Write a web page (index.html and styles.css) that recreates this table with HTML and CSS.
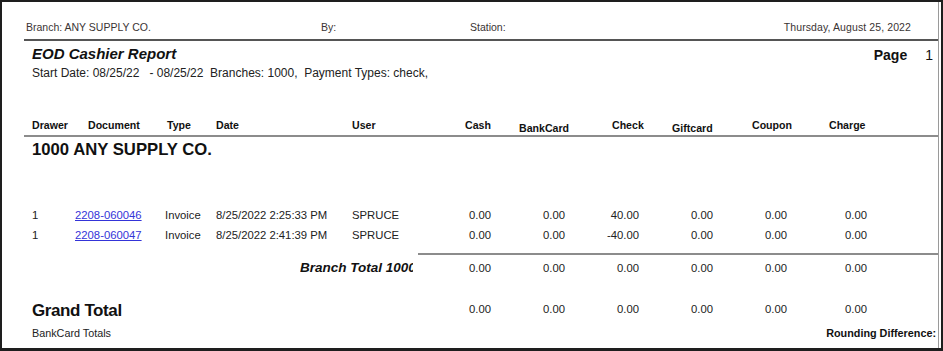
FILE: index.html
```html
<!DOCTYPE html>
<html>
<head>
<meta charset="utf-8">
<title>EOD Cashier Report</title>
<link rel="stylesheet" href="styles.css">
</head>
<body>
<div class="frame">
  <div class="sheet">
    <div class="pagehead">
      <span>Branch: ANY SUPPLY CO.</span>
      <span>By:</span>
      <span>Station:</span>
      <span class="date">Thursday, August 25, 2022</span>
    </div>
    <div class="rule-dark"></div>
    <div class="titlebar">
      <div class="titles">
        <div class="title">EOD Cashier Report</div>
        <div class="subtitle">Start Date: 08/25/22&nbsp;&nbsp; - 08/25/22&nbsp; Branches: 1000,&nbsp; Payment Types: check,</div>
      </div>
      <div class="pageno"><span class="pagelabel">Page</span><span>1</span></div>
    </div>
    <div class="colhead">
      <span>Drawer</span>
      <span>Document</span>
      <span>Type</span>
      <span>Date</span>
      <span>User</span>
      <span>Cash</span>
      <span class="low">BankCard</span>
      <span>Check</span>
      <span class="low">Giftcard</span>
      <span>Coupon</span>
      <span>Charge</span>
    </div>
    <div class="rule-gray"></div>
    <div class="branch">1000 ANY SUPPLY CO.</div>
    <div class="rows">
      <div class="row">
        <span>1</span>
        <a class="doc" href="#">2208-060046</a>
        <span>Invoice</span>
        <span>8/25/2022 2:25:33 PM</span>
        <span>SPRUCE</span>
        <span class="num">0.00</span>
        <span class="num">0.00</span>
        <span class="num">40.00</span>
        <span class="num">0.00</span>
        <span class="num">0.00</span>
        <span class="num">0.00</span>
      </div>
      <div class="row">
        <span>1</span>
        <a class="doc" href="#">2208-060047</a>
        <span>Invoice</span>
        <span>8/25/2022 2:41:39 PM</span>
        <span>SPRUCE</span>
        <span class="num">0.00</span>
        <span class="num">0.00</span>
        <span class="num">-40.00</span>
        <span class="num">0.00</span>
        <span class="num">0.00</span>
        <span class="num">0.00</span>
      </div>
    </div>
    <div class="rule-sub"></div>
    <div class="row total">
      <span class="branch-total">Branch Total 1000</span>
      <span class="num">0.00</span>
      <span class="num">0.00</span>
      <span class="num">0.00</span>
      <span class="num">0.00</span>
      <span class="num">0.00</span>
      <span class="num">0.00</span>
    </div>
    <div class="row grand">
      <span class="grand-label">Grand Total</span>
      <span class="num">0.00</span>
      <span class="num">0.00</span>
      <span class="num">0.00</span>
      <span class="num">0.00</span>
      <span class="num">0.00</span>
      <span class="num">0.00</span>
    </div>
    <div class="footer">
      <span>BankCard Totals</span>
      <span class="rounding">Rounding Difference:</span>
    </div>
  </div>
</div>
</body>
</html>
```
FILE: styles.css
```css
* { box-sizing: border-box; }
html, body { margin: 0; padding: 0; background: #fff; }
body {
  font-family: "Liberation Sans", Arial, sans-serif;
  color: #1c1c1c;
}
.frame {
  width: 943px;
  height: 351px;
  border: 2px solid #1e1e1e;
  border-bottom-width: 3px;
  padding-right: 2px;
  overflow: hidden;
}
.sheet {
  width: 937px;
  height: 100%;
  border-right: 1px solid #9a9a9a;
  padding-left: 22px;
  overflow: hidden;
}
.pagehead {
  height: 37px;
  display: grid;
  grid-template-columns: 295px 149px 1fr auto;
  align-items: end;
  padding-left: 2px;
  padding-right: 27px;
  padding-bottom: 5px;
  font-size: 10.5px;
  line-height: 13px;
  color: #3a3434;
}
.date { letter-spacing: 0.1px; }
.rule-dark {
  height: 2px;
  background: #555;
}
.titlebar {
  display: flex;
  justify-content: space-between;
  padding-left: 8px;
  padding-right: 5px;
  margin-top: 4px;
}
.title {
  font-size: 15px;
  line-height: 18px;
  font-weight: bold;
  font-style: italic;
  color: #111;
}
.subtitle {
  margin-top: 3px;
  font-size: 12px;
  line-height: 14px;
  color: #222;
}
.pageno {
  display: flex;
  gap: 18px;
  font-size: 14px;
  line-height: 18px;
  padding-top: 1px;
  color: #111;
}
.pagelabel { font-weight: bold; }
.colhead {
  margin-top: 39px;
  height: 16px;
  display: grid;
  grid-template-columns: 56px 79px 49px 136px 113px 54px 93px 60px 80px 77px auto;
  padding-left: 8px;
  font-size: 10.6px;
  line-height: 13px;
  font-weight: bold;
  color: #111;
}
.colhead .low { padding-top: 3px; }
.rule-gray {
  height: 2px;
  background: #8c8c8c;
}
.branch {
  margin-top: 3px;
  padding-left: 8px;
  font-size: 16.7px;
  line-height: 19px;
  font-weight: bold;
  color: #111;
}
.rows { margin-top: 46px; }
.row {
  display: grid;
  grid-template-columns: 43px 90px 51px 136px 78px 61px 74px 74px 74px 74px 80px;
  padding-left: 8px;
  height: 20px;
  align-items: center;
  font-size: 11.3px;
  line-height: 14px;
  color: #222;
}
.num { text-align: right; }
.doc {
  color: #3434d8;
  text-decoration: underline;
}
.rule-sub {
  margin-top: 8px;
  margin-left: 394px;
  height: 2px;
  background: #8c8c8c;
}
.total { margin-top: 3px; }
.branch-total {
  grid-column: 1 / 6;
  margin-left: 268px;
  width: 113px;
  overflow: hidden;
  white-space: nowrap;
  font-weight: bold;
  font-style: italic;
  font-size: 13.5px;
  line-height: 16px;
  color: #111;
}
.grand {
  margin-top: 18px;
  height: 22px;
}
.grand-label {
  grid-column: 1 / 6;
  font-size: 17px;
  letter-spacing: -0.4px;
  line-height: 20px;
  font-weight: bold;
  color: #111;
  padding-top: 5px;
}
.footer {
  margin-top: 8px;
  display: flex;
  justify-content: space-between;
  padding-left: 8px;
  padding-right: 2px;
  font-size: 10.8px;
  line-height: 14px;
  color: #222;
}
.rounding {
  font-weight: bold;
  color: #111;
}
```
